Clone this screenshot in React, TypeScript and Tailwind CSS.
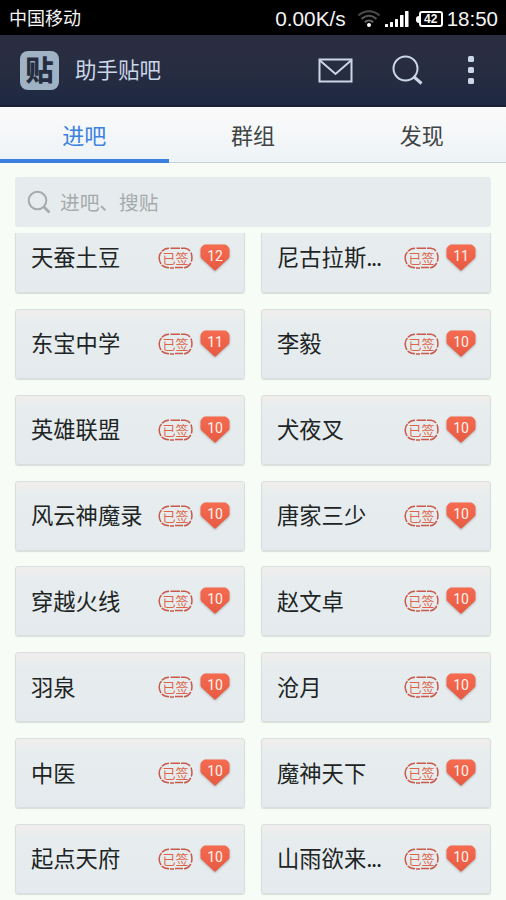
type Forum = {
  name: string;
  level: number;
  truncated?: boolean;
};

const tabs = ["进吧", "群组", "发现"];

const forums: Forum[] = [
  { name: "天蚕土豆", level: 12 },
  { name: "尼古拉斯", level: 11, truncated: true },
  { name: "东宝中学", level: 11 },
  { name: "李毅", level: 10 },
  { name: "英雄联盟", level: 10 },
  { name: "犬夜叉", level: 10 },
  { name: "风云神魔录", level: 10 },
  { name: "唐家三少", level: 10 },
  { name: "穿越火线", level: 10 },
  { name: "赵文卓", level: 10 },
  { name: "羽泉", level: 10 },
  { name: "沧月", level: 10 },
  { name: "中医", level: 10 },
  { name: "魔神天下", level: 10 },
  { name: "起点天府", level: 10 },
  { name: "山雨欲来", level: 10, truncated: true },
];

function StatusBar() {
  return (
    <div className="flex h-[35px] items-center bg-black pl-[9px] pr-[8px] text-[#f4f4f4]">
      <span className="pb-[2px] text-[18px] leading-none">中国移动</span>
      <span className="ml-auto mt-[3px] whitespace-nowrap font-['Liberation_Sans',sans-serif] text-[20.8px] leading-none">
        0.00K/s
      </span>
      <svg className="ml-[11px] mt-[3px] h-[20px] w-[24px]" viewBox="0 0 24 20" fill="none">
        <path d="M1.5 6.5C7.5 .8 16.5 .8 22.5 6.5" stroke="#4c4c4c" strokeWidth="2" />
        <path d="M4.5 10C9 5.6 15 5.6 19.5 10" stroke="#555" strokeWidth="2" />
        <path d="M7.8 13.3C10.3 10.9 13.7 10.9 16.2 13.3" stroke="#666" strokeWidth="2" />
        <circle cx="12" cy="16" r="2" fill="#fff" />
      </svg>
      <svg className="ml-[3px] mt-[2px] h-[18px] w-[25px]" viewBox="0 0 25 18" fill="#fff">
        <rect x="1" y="14" width="3" height="3" rx=".5" />
        <rect x="6" y="12" width="3" height="5" rx=".5" />
        <rect x="11" y="9" width="3" height="8" rx=".5" />
        <rect x="16" y="5" width="3.5" height="12" rx=".5" />
        <rect x="21" y="1" width="3.5" height="16" rx=".5" />
      </svg>
      <div className="ml-[7px] mt-[3px] flex items-center">
        <span className="h-[7px] w-[3px] rounded-l-sm bg-white" />
        <span className="flex h-[16px] w-[24px] items-center justify-center rounded-[3px] border-2 border-white font-['Liberation_Sans',sans-serif] text-[12px] font-bold leading-none">
          42
        </span>
      </div>
      <span className="ml-[4px] mt-[4px] font-['Liberation_Sans',sans-serif] text-[20.5px] leading-none">
        18:50
      </span>
    </div>
  );
}

function Header() {
  return (
    <header className="flex h-[72px] items-center border-b-2 border-[#1b2130] bg-linear-to-b from-[#2b2d40] via-[#272d41] to-[#1e2943] pl-5 pr-[32px] text-[#cbd7e8]">
      <div className="flex size-[39px] items-center justify-center rounded-[8px] bg-[#9fb3c5] pb-[2px] text-[28px] font-black leading-none text-[#262d40]">
        贴
      </div>
      <h1 className="ml-4 pb-[2px] text-[21.5px] leading-none">助手贴吧</h1>
      <svg className="ml-auto h-[25px] w-[35px]" viewBox="0 0 35 25" fill="none" stroke="currentColor" strokeWidth="2">
        <rect x="1.5" y="1.5" width="32" height="22" />
        <path d="M2 2.5L17.5 16L33 2.5" />
      </svg>
      <svg className="ml-[39px] h-[31px] w-[32px]" viewBox="0 0 32 31" fill="none" stroke="currentColor">
        <circle cx="13.5" cy="13.5" r="12" strokeWidth="2" />
        <path d="M21.5 21.5L29.5 28.5" strokeWidth="3" />
      </svg>
      <div className="ml-[44px] flex flex-col gap-[5px]">
        <span className="size-[6px] rounded-[1.5px] bg-current" />
        <span className="size-[6px] rounded-[1.5px] bg-current" />
        <span className="size-[6px] rounded-[1.5px] bg-current" />
      </div>
    </header>
  );
}

function Tabs() {
  return (
    <nav className="grid h-[56px] grid-cols-3 bg-linear-to-b from-[#fbfafa] to-[#edf3f6]">
      {tabs.map((tab, index) => (
        <button
          key={tab}
          className={`flex items-center justify-center text-[22px] leading-none ${
            index === 0
              ? "border-b-4 border-[#3b80df] pt-[2px] text-[#3b82e0]"
              : "border-b border-[#c9d1d6] pb-px text-[#3f4444]"
          }`}
        >
          {tab}
        </button>
      ))}
    </nav>
  );
}

function SearchBox() {
  return (
    <div className="mx-[15px] mt-[14px] flex h-[50px] items-center rounded-[3px] bg-[#e6ebed] pl-3 text-[#a5abac]">
      <svg className="size-6" viewBox="0 0 24 24" fill="none" stroke="currentColor">
        <circle cx="10.5" cy="10.5" r="8.8" strokeWidth="2" />
        <path d="M17 17L22.5 22.5" strokeWidth="2.6" />
      </svg>
      <span className="ml-[9px] text-[19.7px] leading-none">进吧、搜贴</span>
    </div>
  );
}

function SignedStamp() {
  return (
    <div className="relative flex h-[22px] w-[35px] shrink-0 items-center justify-center pb-px text-[13px] leading-none text-[#dc6549]">
      <svg className="absolute inset-0 size-full" viewBox="0 0 35 22" fill="none" stroke="#c9594a">
        <path
          d="M3 17C.5 13 .5 8 3.5 5M4 4.3C6 2 8 1.200 11 1.2M12.500 1.2H22M23 1.2H27C29.5 1.5 31 2.5 32 4M33 5.500C34.2 9 34.2 12 33.3 14.5M32.8 16C31 19 29 20.5 26 20.7M25 20.5H17M16 20.9H12M11 20.7C7.5 20.7 5.5 19.8 3.700 18"
          strokeWidth="1.5"
        />
      </svg>
      已签
    </div>
  );
}

function LevelBadge({ level }: { level: number }) {
  return (
    <div className="relative h-[28px] w-[30px] shrink-0 text-center font-['Roboto',sans-serif] text-[14px] leading-[25px] text-[#fff3ee]">
      <svg className="absolute inset-0 size-full drop-shadow-[0_1px_1px_rgba(0,0,0,0.25)]" viewBox="0 0 30 28">
        <defs>
          <linearGradient id="badge" x1="0" y1="0" x2="0" y2="1">
            <stop offset="0" stopColor="#f56b50" />
            <stop offset="1" stopColor="#e65a42" />
          </linearGradient>
        </defs>
        <path
          d="M5.5 .5H24.5Q26 .5 27 1.5L28.500 3Q29.5 4 29.5 5.500V12Q29.5 13.5 28.5 14.5L16 26Q15 27 14 26L1.5 14.5Q.5 13.5 .5 12V5.5Q.5 4 1.5 3L3 1.5Q4 .5 5.5 .5Z"
          fill="url(#badge)"
        />
      </svg>
      <span className="relative">{level}</span>
    </div>
  );
}

function ForumCard({ name, level, truncated }: Forum) {
  return (
    <div className="flex items-center rounded-[3px] border border-[#d9dfdf] bg-linear-to-b from-[#f0eeec] from-0% via-[#e7edee] via-20% to-[#e5eaee] pl-[15px] pr-[15px] shadow-[0_1px_1px_rgba(0,0,0,0.12)]">
      <span className="whitespace-nowrap pb-[3px] text-[22.3px] leading-none text-[#202424]">
        {name}
        {truncated && <span className="tracking-[-1.3px]">...</span>}
      </span>
      <div className="-mr-px ml-auto flex items-center gap-[7px]">
        <SignedStamp />
        <LevelBadge level={level} />
      </div>
    </div>
  );
}

export default function App() {
  return (
    <div className="flex h-[900px] w-[506px] flex-col overflow-hidden bg-[#f7fcf7] font-['Noto_Sans_CJK_SC',sans-serif]">
      <StatusBar />
      <Header />
      <Tabs />
      <SearchBox />
      <main className="mt-[6px] min-h-0 flex-1 overflow-hidden px-[15px]">
        <div className="-mt-[10px] grid auto-rows-[70px] grid-cols-2 gap-x-4 gap-y-[15.86px]">
          {forums.map((forum) => (
            <ForumCard key={forum.name} {...forum} />
          ))}
        </div>
      </main>
    </div>
  );
}
